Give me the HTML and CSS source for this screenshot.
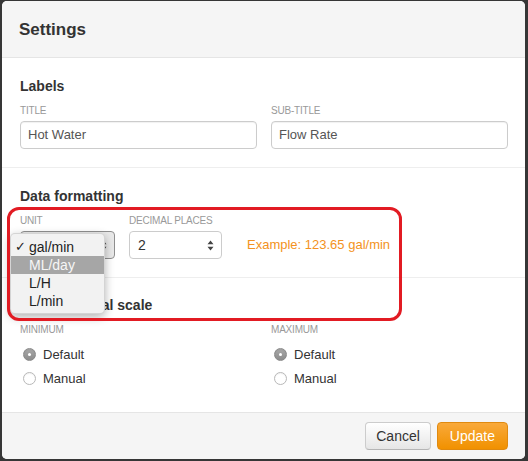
FILE: index.html
```html
<!DOCTYPE html>
<html>
<head>
<meta charset="utf-8">
<title>Settings</title>
<link rel="stylesheet" href="styles.css">
</head>
<body>
<div class="modal">
  <div class="modal-header"><h1 class="modal-title">Settings</h1></div>
  <div class="modal-body">
    <section class="section">
      <h2 class="section-title">Labels</h2>
      <div class="grid-2">
        <div class="field">
          <label class="field-label">TITLE</label>
          <div class="input">Hot Water</div>
        </div>
        <div class="field">
          <label class="field-label">SUB-TITLE</label>
          <div class="input">Flow Rate</div>
        </div>
      </div>
    </section>
    <section class="section">
      <h2 class="section-title">Data formatting</h2>
      <div class="format-row">
        <div class="field field-unit">
          <label class="field-label">UNIT</label>
          <div class="select select-open">
            <span class="select-value">gal/min</span>
            <svg class="select-arrows" width="7" height="11" viewBox="0 0 7 11"><path d="M3.5 0.5 L6.5 4.2 L0.5 4.2 Z M3.5 10.5 L6.5 6.8 L0.5 6.8 Z" fill="#444"/></svg>
          </div>
          <ul class="menu">
            <li class="menu-item"><span class="check">✓</span>gal/min</li>
            <li class="menu-item menu-item-active">ML/day</li>
            <li class="menu-item">L/H</li>
            <li class="menu-item">L/min</li>
          </ul>
        </div>
        <div class="field field-decimal">
          <label class="field-label">DECIMAL PLACES</label>
          <div class="select">
            <span class="select-value">2</span>
            <svg class="select-arrows" width="7" height="11" viewBox="0 0 7 11"><path d="M3.5 0.5 L6.5 4.2 L0.5 4.2 Z M3.5 10.5 L6.5 6.8 L0.5 6.8 Z" fill="#444"/></svg>
          </div>
        </div>
        <div class="example">Example: 123.65 gal/min</div>
      </div>
    </section>
    <section class="section section-last">
      <h2 class="section-title">Y-axis vertical scale</h2>
      <div class="grid-2">
        <div class="field">
          <label class="field-label">MINIMUM</label>
          <div class="radio"><span class="radio-dot radio-checked"></span>Default</div>
          <div class="radio"><span class="radio-dot"></span>Manual</div>
        </div>
        <div class="field">
          <label class="field-label">MAXIMUM</label>
          <div class="radio"><span class="radio-dot radio-checked"></span>Default</div>
          <div class="radio"><span class="radio-dot"></span>Manual</div>
        </div>
      </div>
    </section>
  </div>
  <div class="modal-footer">
    <button class="btn btn-default">Cancel</button>
    <button class="btn btn-primary">Update</button>
  </div>
</div>
<div class="annotation"></div>
</body>
</html>
```
FILE: styles.css
```css
* { box-sizing: border-box; }
html, body { margin: 0; padding: 0; }
body {
  background: #363636;
  width: 528px;
  height: 461px;
  overflow: hidden;
  position: relative;
  font-family: "Liberation Sans", Arial, sans-serif;
  color: #333;
}
.modal {
  margin: 1px 3px 2px 2px;
  height: 458px;
  background: #fff;
  border-radius: 5px;
  overflow: hidden;
  display: flex;
  flex-direction: column;
}
.modal-header {
  height: 57px;
  flex: none;
  background: #f5f5f5;
  border-bottom: 1px solid #e5e5e5;
  padding: 2px 18px 0 17px;
  display: flex;
  align-items: center;
}
.modal-title {
  margin: 0;
  font-size: 17px;
  font-weight: bold;
  color: #333;
}
.modal-body {
  flex: 1;
  display: flex;
  flex-direction: column;
}
.section {
  padding: 20px 17px 18px 18px;
  border-bottom: 1px solid #eee;
}
.section-last {
  border-bottom: none;
  padding-top: 19px;
}
.section-title {
  margin: 0 0 11px;
  font-size: 14px;
  line-height: 16px;
  font-weight: bold;
  color: #333;
}
.grid-2 {
  display: grid;
  grid-template-columns: 237px 237px;
  column-gap: 14px;
}
.field { position: relative; }
.field-label {
  display: block;
  font-size: 10px;
  line-height: 12px;
  color: #999;
  margin-bottom: 4px;
  letter-spacing: -0.2px;
}
.input {
  height: 28px;
  border: 1px solid #ccc;
  border-radius: 4px;
  padding: 0 7px;
  font-size: 13px;
  line-height: 26px;
  color: #555;
  box-shadow: inset 0 1px 1px rgba(0,0,0,0.06);
}
.format-row {
  display: flex;
  align-items: flex-end;
}
.field-unit { width: 95px; }
.field-decimal { width: 93px; margin-left: 14px; }
.select {
  height: 28px;
  border: 1px solid #ccc;
  border-radius: 4px;
  background: #fff;
  display: flex;
  align-items: center;
  justify-content: space-between;
  padding: 0 7px 0 8px;
  font-size: 14px;
  color: #333;
}
.select-open {
  background: #e9e9e9;
  border-color: #8f8f8f;
}
.select-arrows { display: block; }
.example {
  margin-left: 25px;
  height: 28px;
  line-height: 28px;
  font-size: 13px;
  color: #f39221;
}
.menu {
  position: absolute;
  left: -10px;
  top: 18px;
  width: 95px;
  margin: 0;
  padding: 4px 0 3px;
  list-style: none;
  background: #f2f2f2;
  border: 1px solid rgba(0,0,0,0.12);
  border-radius: 5px;
  box-shadow: 0 3px 10px rgba(0,0,0,0.3);
  z-index: 5;
}
.menu-item {
  position: relative;
  height: 18px;
  line-height: 18px;
  padding-left: 18px;
  font-size: 14px;
  color: #222;
}
.menu-item-active {
  background: #a6a6a6;
  color: #f6f6f6;
}
.check {
  position: absolute;
  left: 4px;
  top: 0;
  font-size: 13px;
  font-family: "DejaVu Sans", sans-serif;
}
.radio {
  height: 20px;
  display: flex;
  align-items: center;
  font-size: 13px;
  color: #333;
  margin-top: 4px;
}
.field-label + .radio { margin-top: 8px; }
.radio-dot {
  width: 13px;
  height: 13px;
  border-radius: 50%;
  border: 1px solid #b8b8b8;
  background: #fff;
  margin: 0 7px 0 3px;
  position: relative;
  box-shadow: inset 0 1px 1px rgba(0,0,0,0.05);
}
.radio-checked {
  background: linear-gradient(#a8a8a8, #8c8c8c);
  border-color: #8a8a8a;
}
.radio-checked::after {
  content: "";
  position: absolute;
  left: 4px;
  top: 4px;
  width: 3px;
  height: 3px;
  border-radius: 50%;
  background: #fff;
}
.modal-footer {
  height: 47px;
  flex: none;
  background: #f5f5f5;
  border-top: 1px solid #e5e5e5;
  padding: 0 17px 0 18px;
  display: flex;
  justify-content: flex-end;
  align-items: center;
}
.btn {
  height: 28px;
  border-radius: 4px;
  font-family: "Liberation Sans", Arial, sans-serif;
  font-size: 14px;
  padding: 0 10px;
  margin: 0;
  cursor: pointer;
}
.btn-default {
  background: linear-gradient(#ffffff, #e6e6e6);
  border: 1px solid #ccc;
  border-bottom-color: #b5b5b5;
  color: #333;
}
.btn-primary {
  margin-left: 6px;
  padding: 0 12px;
  background: linear-gradient(#f9a93a, #f19100);
  border: 1px solid #e08a10;
  color: #fff;
}
.annotation {
  position: absolute;
  left: 7px;
  top: 207px;
  width: 395px;
  height: 114px;
  border: 3.5px solid #e21b23;
  border-radius: 12px;
  z-index: 10;
  pointer-events: none;
}
```
